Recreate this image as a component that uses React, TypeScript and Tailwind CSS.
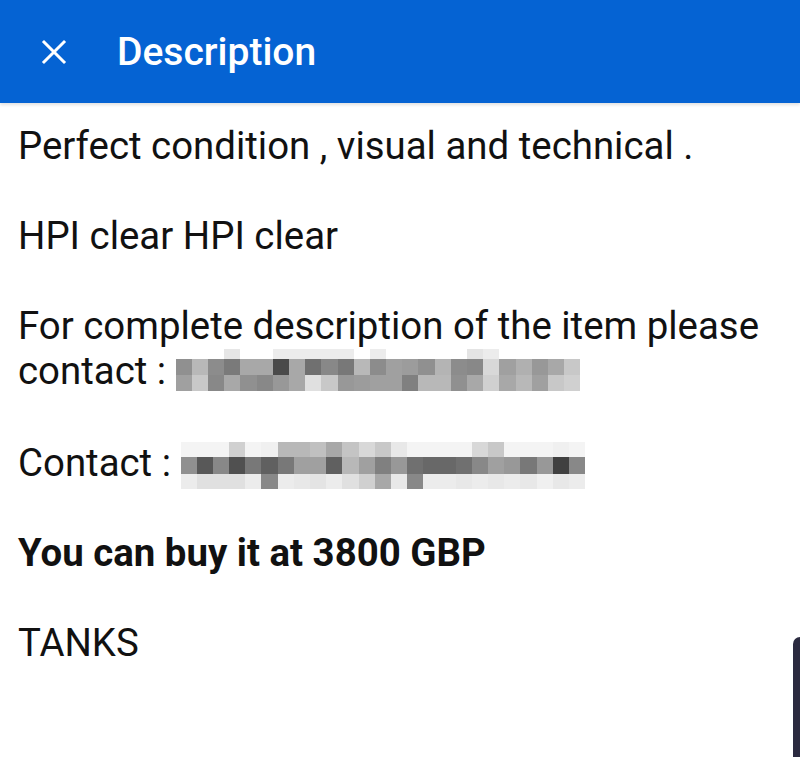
import React from "react";

const blurOne = [
  ["#fff", "#fff", "#fff", "#e6e6e6", "#fff", "#fff", "#ececec", "#ececec", "#ececec", "#ececec", "#ececec", "#fff", "#ececec", "#fff", "#fff", "#fff", "#fff", "#fff", "#e4e4e4", "#ececec", "#fff", "#fff", "#fff", "#fff", "#fff"],
  ["#909090", "#b8b8b8", "#8c8c8c", "#7a7a7a", "#a8a8a8", "#a8a8a8", "#4a4a4a", "#a8a8a8", "#707070", "#888888", "#787878", "#b8b8b8", "#8c8c8c", "#a0a0a0", "#9c9c9c", "#909090", "#b4b4b4", "#8c8c8c", "#888888", "#d8d8d8", "#a0a0a0", "#b0b0b0", "#989898", "#a8a8a8", "#c8c8c8"],
  ["#a0a0a0", "#c8c8c8", "#888888", "#a8a8a8", "#909090", "#888888", "#989898", "#a8a8a8", "#e0e0e0", "#c8c8c8", "#989898", "#9c9c9c", "#a0a0a0", "#a0a0a0", "#808080", "#b8b8b8", "#b8b8b8", "#909090", "#a8a8a8", "#d0d0d0", "#a8a8a8", "#b8b8b8", "#a0a0a0", "#c8c8c8", "#d0d0d0"],
];

const blurTwo = [
  ["#f4f4f4", "#f4f4f4", "#f4f4f4", "#d0d0d0", "#f4f4f4", "#f0f0f0", "#b8b8b8", "#b8b8b8", "#c0c0c0", "#a8a8a8", "#c4c4c4", "#d8d8d8", "#c8c8c8", "#e8e8e8", "#f4f4f4", "#f4f4f4", "#f4f4f4", "#f4f4f4", "#d8d8d8", "#c8c8c8", "#f4f4f4", "#f4f4f4", "#f4f4f4", "#f0f0f0", "#f4f4f4"],
  ["#909090", "#585858", "#888888", "#505050", "#787878", "#606060", "#787878", "#a0a0a0", "#a0a0a0", "#606060", "#b8b8b8", "#a0a0a0", "#808080", "#989898", "#707070", "#686868", "#686868", "#707070", "#888888", "#a0a0a0", "#989898", "#787878", "#989898", "#404040", "#888888"],
  ["#ececec", "#e0e0e0", "#e0e0e0", "#e0e0e0", "#ececec", "#888888", "#ececec", "#e8e8e8", "#e4e4e4", "#ececec", "#e0e0e0", "#d0d0d0", "#a8a8a8", "#e8e8e8", "#888888", "#ececec", "#ececec", "#e8e8e8", "#ececec", "#e8e8e8", "#ececec", "#e8e8e8", "#f0f0f0", "#e8e8e8", "#ececec"],
];

// pixelated block standing in for a hidden contact detail
const Redacted = ({ rows, heights, className }: { rows: string[][]; heights: string[]; className: string }) => (
  <span className={`inline-block ${className}`}>
    {rows.map((row, r) => (
      <span key={r} className="flex">
        {row.map((c, i) => (
          <span key={i} className={`w-[16.2px] ${heights[r]}`} style={{ backgroundColor: c }} />
        ))}
      </span>
    ))}
  </span>
);

export default function App() {
  return (
    <div
      className="relative w-[800px] h-[757px] bg-white overflow-hidden"
      style={{ fontFamily: "Roboto, 'Noto Sans', sans-serif" }}
    >
      {/* Top bar */}
      <div className="h-[103px] bg-[#0563d3] flex items-center shadow-[0_2px_3px_rgba(0,0,0,0.12)]">
        <button className="ml-[38px] w-8 h-8 flex items-center justify-center text-white">
          <svg width="30" height="30" viewBox="0 0 24 24" fill="none" stroke="currentColor" strokeWidth="2.4" strokeLinecap="square">
            <path d="M4 4 L20 20 M20 4 L4 20" />
          </svg>
        </button>
        <h1 className="ml-[47px] text-white text-[39px] font-medium leading-none mt-[2px]">
          Description
        </h1>
      </div>

      {/* Body */}
      <div className="px-[18px] pt-[20px] text-[38.4px] leading-[45px] text-[#111]">
        <p>Perfect condition , visual and technical .</p>
        <p className="mt-[45px]">HPI clear HPI clear</p>
        <p className="mt-[45px]">
          For complete description of the item please{" "}
          <span className="whitespace-nowrap">
            contact :{" "}
            <Redacted rows={blurOne} heights={["h-[10px]", "h-[16px]", "h-[16px]"]} className="align-[-7px]" />
          </span>
        </p>
        <p className="mt-[45px] whitespace-nowrap">
          Contact :{" "}
          <Redacted
            rows={blurTwo}
            heights={["h-[15px]", "h-[17px]", "h-[15px]"]}
            className="align-[-9px] relative top-[4px]"
          />
        </p>
        <p className="mt-[45px] font-bold">You can buy it at 3800 GBP</p>
        <p className="mt-[45px]">TANKS</p>
      </div>

      {/* scroll handle */}
      <div className="absolute right-0 top-[637px] w-[7px] h-[140px] rounded-tl-[8px] bg-[#2b2a40]" />
    </div>
  );
}
